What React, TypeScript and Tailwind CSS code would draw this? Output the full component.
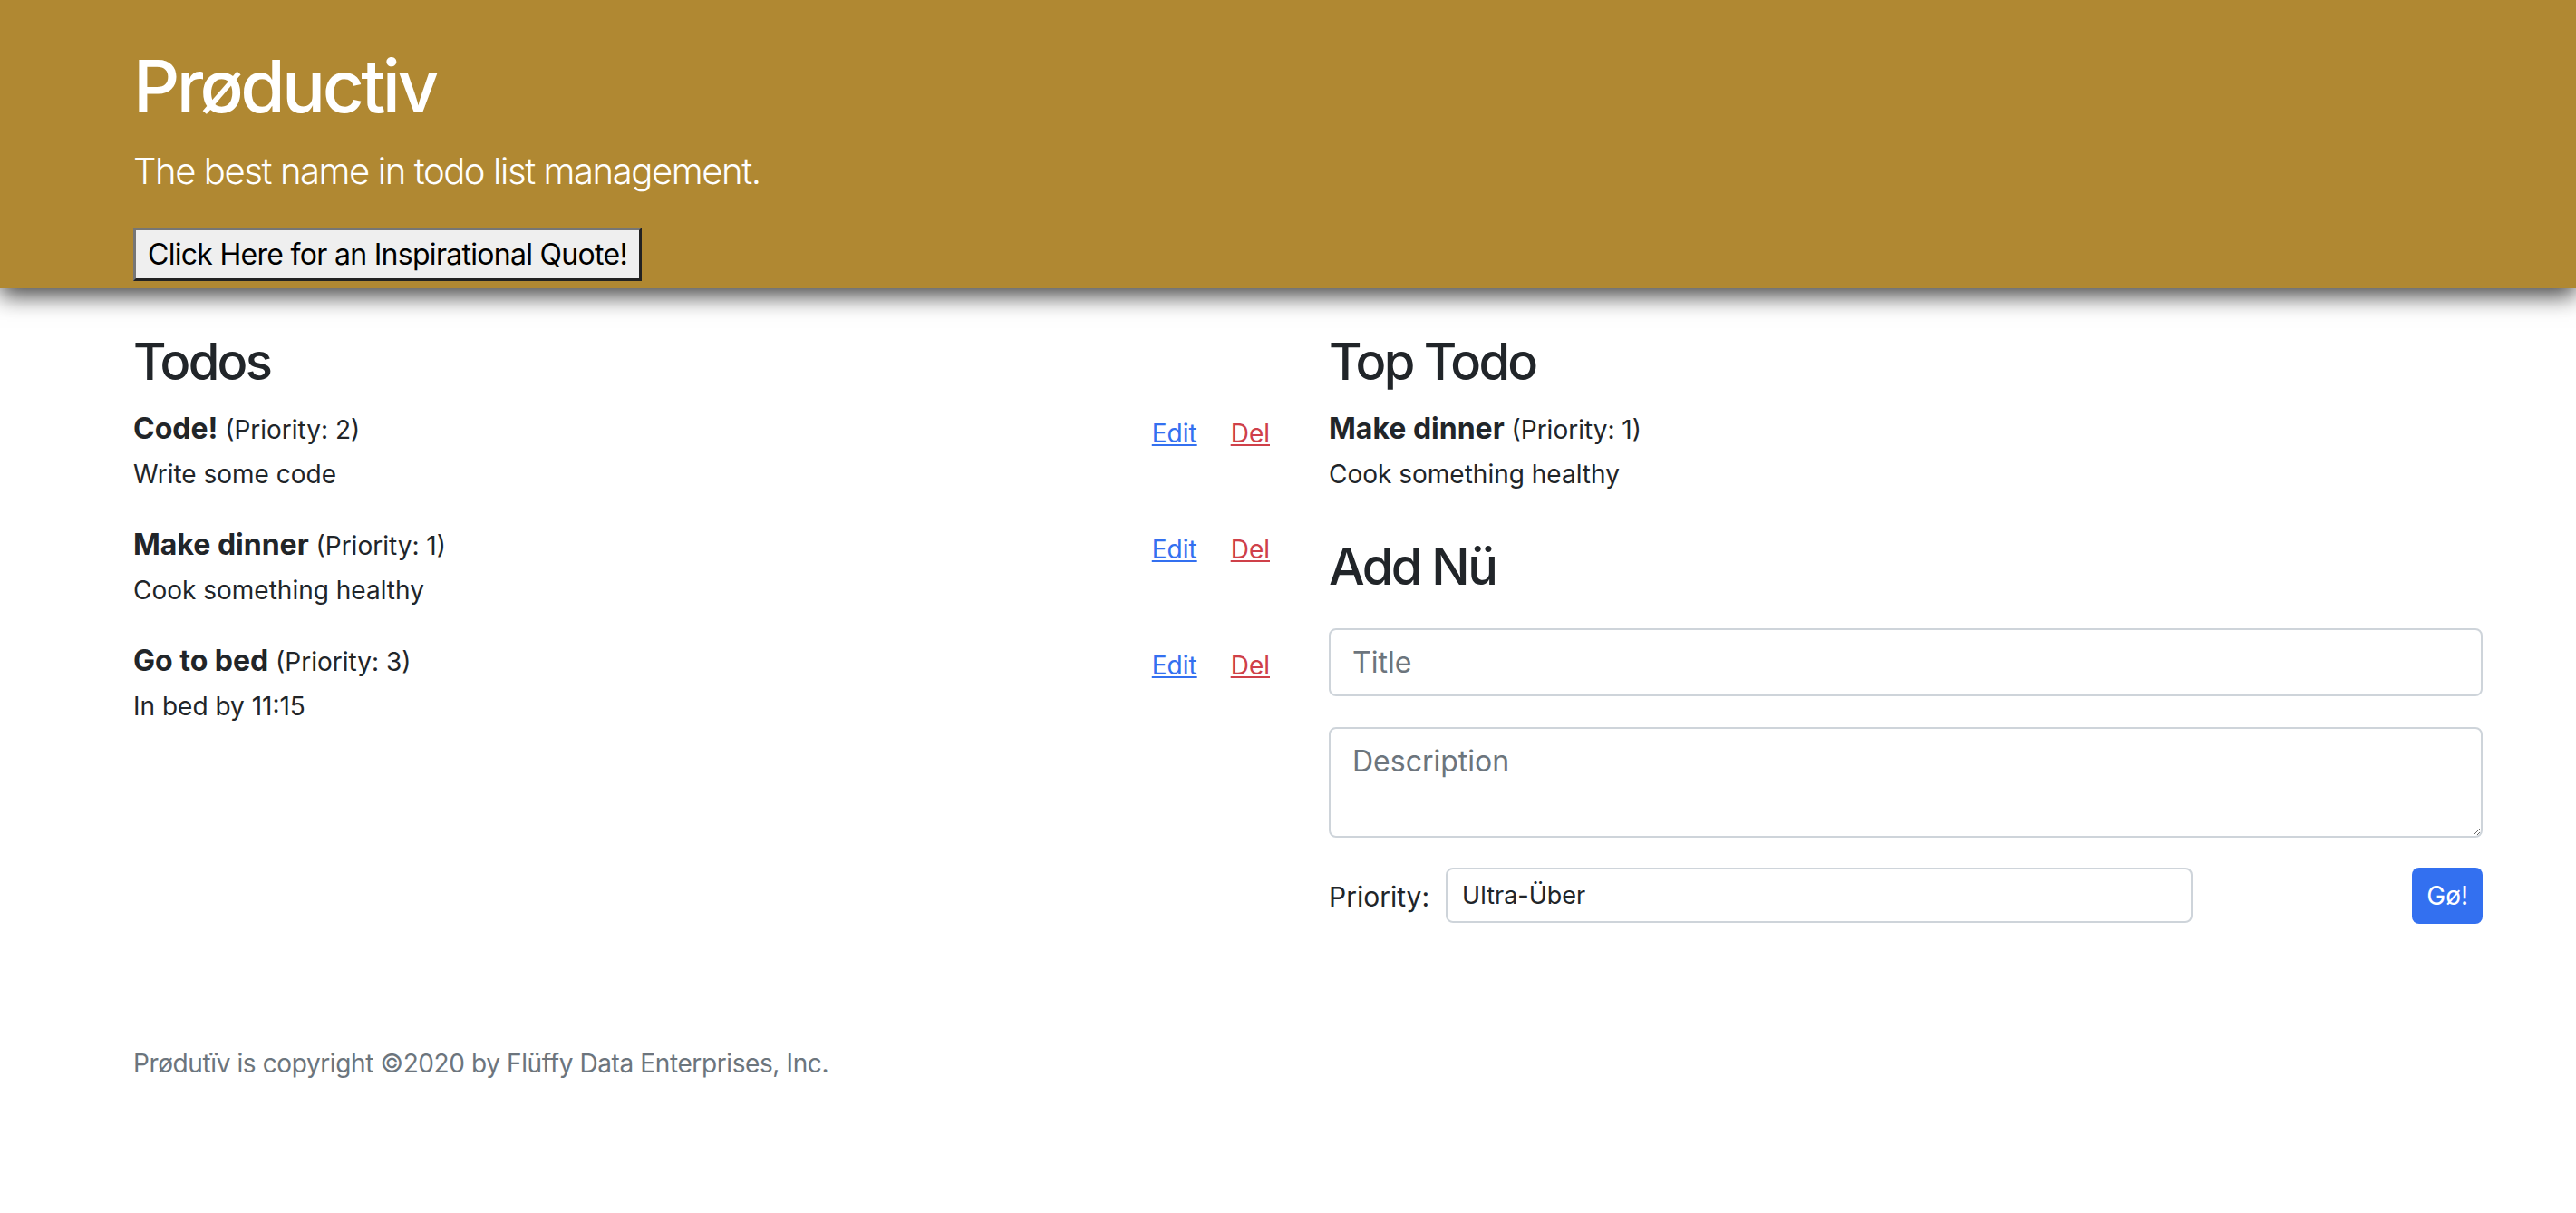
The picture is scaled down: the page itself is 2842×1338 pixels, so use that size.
import { useState } from "react";

type Todo = { id: number; title: string; description: string; priority: number };

const TODOS: Todo[] = [
  { id: 1, title: "Code!", description: "Write some code", priority: 2 },
  { id: 2, title: "Make dinner", description: "Cook something healthy", priority: 1 },
  { id: 3, title: "Go to bed", description: "In bed by 11:15", priority: 3 },
];

function TodoItem({ todo, actions }: { todo: Todo; actions?: boolean }) {
  return (
    <div className="mb-[30px]">
      <div className="flex h-[48px] items-start justify-between">
        <p className="text-[32px] leading-[48px]">
          <span className="font-bold">{todo.title}</span>
          <span className="text-[28px]"> (Priority: {todo.priority})</span>
        </p>
        {actions && (
          <div className="flex gap-[37px] pt-[5px] text-[28px] leading-[48px]">
            <a href="#" className="text-[#3370f0] underline">
              Edit
            </a>
            <a href="#" className="text-[#cf4049] underline">
              Del
            </a>
          </div>
        )}
      </div>
      <p className="mt-[2px] text-[28px] leading-[48px]">{todo.description}</p>
    </div>
  );
}

export default function App() {
  const [todos] = useState<Todo[]>(TODOS);
  const top = [...todos].sort((a, b) => a.priority - b.priority)[0];

  return (
    <div className="min-h-screen bg-white font-['Inter','Noto_Sans',sans-serif] text-[#212529]">
      {/* Header */}
      <header className="bg-[#b08832] pt-[47px] pb-[8px] pl-[147px] text-white shadow-[0_8px_24px_rgba(0,0,0,0.75)]">
        <h1 className="text-[80px] font-medium leading-[96px] tracking-[-0.045em]">Prøductiv</h1>
        <p className="mt-[16px] text-[40px] font-light leading-[60px] tracking-[-0.035em]">
          The best name in todo list management.
        </p>
        <button className="mt-[32px] flex h-[59px] items-center border-[3px] border-t-[#767676] border-l-[#767676] border-r-[#222] border-b-[#222] bg-[#efefef] px-[13px] text-[32px] leading-[48px] tracking-[-0.022em] text-black">
          Click Here for an Inspirational Quote!
        </button>
      </header>

      {/* Main */}
      <main className="grid grid-cols-[1272px_1273px] gap-x-[47px] pt-[48px] pl-[147px]">
        <section className="pr-[18px]">
          <h3 className="mb-[16px] text-[56px] font-medium leading-[67px] tracking-[-0.048em]">Todos</h3>
          {todos.map((t) => (
            <TodoItem key={t.id} todo={t} actions />
          ))}
        </section>

        <section>
          <h3 className="mb-[16px] text-[56px] font-medium leading-[67px] tracking-[-0.048em]">Top Todo</h3>
          <TodoItem todo={top} />

          <h3 className="mt-[45px] mb-[34px] text-[56px] font-medium leading-[67px] tracking-[-0.045em]">Add Nü</h3>
          <form className="flex flex-col" onSubmit={(e) => e.preventDefault()}>
            <input
              placeholder="Title"
              className="h-[75px] rounded-[8px] border-2 border-[#ced4da] px-[24px] text-[32px] placeholder:text-[#6c757d]"
            />
            <textarea
              placeholder="Description"
              className="mt-[34px] h-[122px] rounded-[8px] border-2 border-[#ced4da] px-[24px] py-[12px] text-[32px] leading-[48px] placeholder:text-[#6c757d]"
            />
            <div className="mt-[33px] flex items-start justify-between">
              <div className="flex items-start gap-[18px]">
                <label className="pt-[8px] text-[30px] leading-[48px]">Priority:</label>
                <input
                  defaultValue="Ultra-Über"
                  className="h-[61px] w-[824px] rounded-[8px] border-2 border-[#ced4da] px-[16px] text-[27px] text-[#212529]"
                />
              </div>
              <button className="h-[62px] rounded-[8px] bg-[#3370f0] px-[16px] text-[28px] text-white">
                Gø!
              </button>
            </div>
          </form>
        </section>
      </main>

      <footer className="mt-[133px] pl-[147px] text-[28px] leading-[42px] tracking-[-0.014em] text-[#6c757d]">
        Prødutïv is copyright ©2020 by Flüffy Data Enterprises, Inc.
      </footer>
    </div>
  );
}
